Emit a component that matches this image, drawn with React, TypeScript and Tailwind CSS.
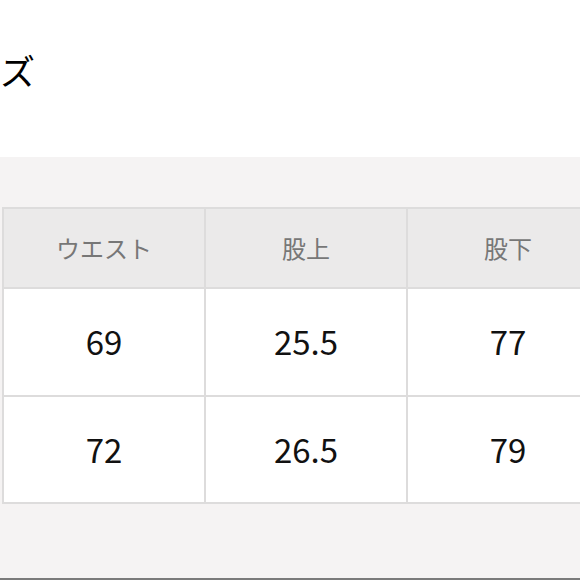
const headers = ["ウエスト", "股上", "股下"];
const rows = [
  ["69", "25.5", "77"],
  ["72", "26.5", "79"],
];

const App = () => {
  return (
    <div className="w-[580px] h-[580px] overflow-hidden bg-white flex flex-col">
      {/* Title, only its last glyph is in view */}
      <div className="h-[157px] shrink-0 pt-[50px]">
        <h2
          className="text-[35px] leading-[40px] text-black whitespace-nowrap"
          style={{ fontFamily: '"Noto Sans CJK JP", sans-serif' }}
        >
          ズ
        </h2>
      </div>

      {/* Size table */}
      <section className="flex-1 bg-[#f5f3f3] pt-[50px] border-b-2 border-[#7a7a7a] overflow-hidden">
        <div className="ml-[2px] w-max bg-[#dddcdc] p-[2px] grid grid-cols-[repeat(3,200px)] gap-[2px]">
          {headers.map((h) => (
            <div
              key={h}
              className="h-[78px] bg-[#ebeaea] flex items-center justify-center text-[24px] text-[#777777]"
              style={{ fontFamily: '"Noto Sans CJK JP", sans-serif' }}
            >
              {h}
            </div>
          ))}
          {rows.map((row, i) =>
            row.map((v, j) => (
              <div
                key={`${i}-${j}`}
                className={`${i === 0 ? "h-[106px]" : "h-[105px]"} bg-white flex items-center justify-center text-[33px] text-[#111111]`}
                style={{ fontFamily: '"Noto Sans CJK JP", sans-serif' }}
              >
                {v}
              </div>
            ))
          )}
        </div>
      </section>
    </div>
  );
};

export default App;
